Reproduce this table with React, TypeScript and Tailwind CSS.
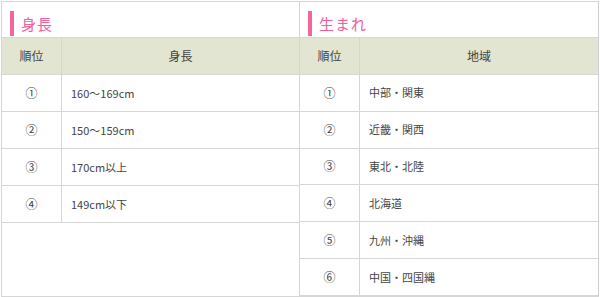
import React from "react";

const font = { fontFamily: '"Noto Sans CJK JP", "Noto Sans", sans-serif' };

function Row({ rank, text, last }: { rank: string; text: string; last?: boolean }) {
  return (
    <div className="flex h-[37px] border-t border-[#d6d6d6]">
      <div className="w-[60px] flex items-center justify-center border-r border-[#d6d6d6] text-[12px] text-[#444]">
        {rank}
      </div>
      <div className="flex-1 flex items-center pl-[9px] text-[11px] text-[#444]">{text}</div>
    </div>
  );
}

function Box({
  title,
  col,
  rows,
  className,
}: {
  title: string;
  col: string;
  rows: string[];
  className: string;
}) {
  const marks = ["①", "②", "③", "④", "⑤", "⑥"];
  return (
    <div className={"flex flex-col h-[296px] border border-[#d6d6d6] " + className}>
      <div className="h-[35px] flex items-end pb-[1px] pl-[8px]">
        <div className="flex items-center h-[25px] gap-[7px]">
          <div className="w-[4px] h-[25px] bg-[#f4659c]" />
          <span className="text-[15px] text-[#f0609a] tracking-[1px] leading-none">{title}</span>
        </div>
      </div>
      <div className="flex h-[37px] border-t border-[#d6d6d6] bg-[#e1e5d2]">
        <div className="w-[60px] flex items-center justify-center border-r border-[#d6d6d6] text-[12px] text-[#444]">
          順位
        </div>
        <div className="flex-1 flex items-center justify-center text-[12px] text-[#444]">{col}</div>
      </div>
      {rows.map((r, i) => (
        <Row key={i} rank={marks[i]} text={r} />
      ))}
      <div className="flex-1 border-t border-[#d6d6d6]" />
    </div>
  );
}

export default function App() {
  return (
    <div className="w-[600px] h-[297px] bg-white pt-[1px] pl-[1px] flex" style={font}>
      <Box
        title="身長"
        col="身長"
        rows={["160～169cm", "150～159cm", "170cm以上", "149cm以下"]}
        className="w-[299px]"
      />
      <Box
        title="生まれ"
        col="地域"
        rows={["中部・関東", "近畿・関西", "東北・北陸", "北海道", "九州・沖縄", "中国・四国縄"]}
        className="w-[299px] border-l-0 border-r-[#cfcfcf]"
      />
    </div>
  );
}
